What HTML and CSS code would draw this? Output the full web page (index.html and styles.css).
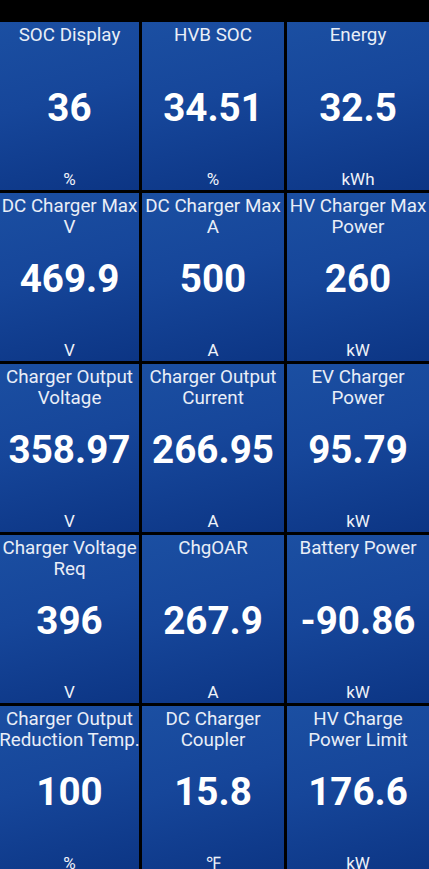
FILE: index.html
```html
<!DOCTYPE html>
<html>
<head>
<meta charset="utf-8">
<link rel="stylesheet" href="styles.css">
</head>
<body>
<div class="statusbar"></div>
<div class="grid">
  <div class="tile"><div class="title">SOC Display</div><div class="value">36</div><div class="unit">%</div></div>
  <div class="tile"><div class="title">HVB SOC</div><div class="value">34.51</div><div class="unit">%</div></div>
  <div class="tile"><div class="title">Energy</div><div class="value">32.5</div><div class="unit">kWh</div></div>

  <div class="tile"><div class="title">DC Charger Max V</div><div class="value">469.9</div><div class="unit">V</div></div>
  <div class="tile"><div class="title">DC Charger Max A</div><div class="value">500</div><div class="unit">A</div></div>
  <div class="tile"><div class="title">HV Charger Max Power</div><div class="value">260</div><div class="unit">kW</div></div>

  <div class="tile"><div class="title">Charger Output Voltage</div><div class="value">358.97</div><div class="unit">V</div></div>
  <div class="tile"><div class="title">Charger Output Current</div><div class="value">266.95</div><div class="unit">A</div></div>
  <div class="tile"><div class="title">EV Charger Power</div><div class="value">95.79</div><div class="unit">kW</div></div>

  <div class="tile"><div class="title">Charger Voltage Req</div><div class="value">396</div><div class="unit">V</div></div>
  <div class="tile"><div class="title">ChgOAR</div><div class="value">267.9</div><div class="unit">A</div></div>
  <div class="tile"><div class="title">Battery Power</div><div class="value">-90.86</div><div class="unit">kW</div></div>

  <div class="tile"><div class="title">Charger Output <span class="nw">Reduction Temp.</span></div><div class="value">100</div><div class="unit">%</div></div>
  <div class="tile"><div class="title">DC Charger Coupler</div><div class="value">15.8</div><div class="unit">℉</div></div>
  <div class="tile"><div class="title">HV Charge Power Limit</div><div class="value">176.6</div><div class="unit">kW</div></div>
</div>
</body>
</html>
```

FILE: styles.css
```css
html, body {
  margin: 0;
  padding: 0;
  background: #000;
  width: 429px;
  height: 869px;
  overflow: hidden;
  font-family: Roboto, "Liberation Sans", sans-serif;
}

.statusbar {
  height: 22px;
  background: #000;
}

.grid {
  display: grid;
  grid-template-columns: 139px 142px 142px;
  grid-auto-rows: 168px;
  column-gap: 3px;
  row-gap: 3px;
}

.tile {
  display: grid;
  grid-template-rows: 1fr auto 1fr;
  background: linear-gradient(165deg, #1b4fa2 0%, #16469a 45%, #0c3584 100%);
  color: #f2f5fb;
  text-align: center;
  overflow: hidden;
}

.title {
  align-self: start;
  font-size: 18.8px;
  line-height: 21px;
  padding-top: 3px;
  color: #e9eef7;
  white-space: normal;
}

.nw {
  display: inline-block;
  white-space: nowrap;
  margin: 0 -3px;
}

.value {
  font-size: 38.6px;
  font-weight: 700;
  line-height: 46px;
  padding-top: 3px;
  color: #fff;
  white-space: nowrap;
}

.unit {
  align-self: end;
  font-size: 17px;
  line-height: 20px;
  padding-bottom: 1px;
  color: #eef2f9;
}
```
